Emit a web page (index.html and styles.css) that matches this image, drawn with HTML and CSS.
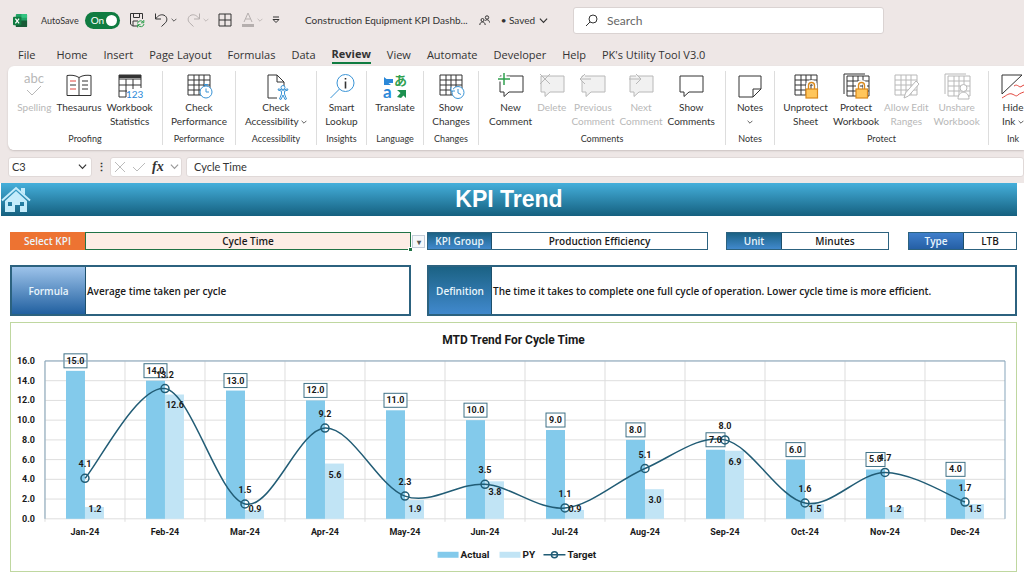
FILE: index.html
```html
<!DOCTYPE html>
<html lang="en">
<head>
  <meta charset="UTF-8" />
  <meta name="viewport" content="width=device-width, initial-scale=1" />
  <title>Construction Equipment KPI Dashboard</title>
  <link rel="stylesheet" href="styles.css">
</head>
<body>

  <!-- shared icon shapes -->
  <svg class="defs" width="0" height="0" aria-hidden="true">
    <symbol id="bubble" viewBox="0 0 26 26">
      <path d="M2 3h23v16H11l-5 4.500v-4.500H2z" />
    </symbol>
    <symbol id="grid" viewBox="0 0 26 26">
      <path d="M2 2h22v20H2zM2 7h22M2 12h22M2 17h22M8 2v20M13 2v20M18 2v20" />
    </symbol>
    <symbol id="lock" viewBox="0 0 26 26">
      <path d="M15 16v-3.500a3.500 3.500 0 0 1 7 0V16" fill="none" stroke="#fff" stroke-width="4" />
      <path d="M15.500 16v-3.500a3 3 0 0 1 6 0V16" fill="none" stroke="#d9891c" stroke-width="1.400" />
      <rect x="13" y="16" width="11.500" height="9" fill="#ffc65c" stroke="#d9891c" stroke-width="1.200" />
    </symbol>
    <symbol id="chevron" viewBox="0 0 10 10">
      <path d="M1 3l4 4 4-4" fill="none" stroke="currentColor" stroke-width="1.300" />
    </symbol>
  </svg>

  <header class="titlebar">
    <svg class="logo" viewBox="0 0 16 16" aria-hidden="true">
      <rect x="3" y="1" width="12" height="14" rx="1" fill="#21a366" />
      <path d="M9 1h5a1 1 0 0 1 1 1v3H9z" fill="#33c481" />
      <path d="M3 8h12v6a1 1 0 0 1-1 1H4a1 1 0 0 1-1-1z" fill="#185c37" />
      <rect x="0" y="4" width="9" height="9" rx="1" fill="#107c41" />
      <path d="M2.500 6l4 5M6.500 6l-4 5" stroke="#fff" stroke-width="1.300" />
    </svg>
    <label class="autosave">AutoSave
      <span class="switch"><input type="checkbox" checked /><span>On</span></span>
    </label>
    <div class="quick">
      <button aria-label="Save">
        <svg width="16" height="16" viewBox="0 0 16 16"><path d="M9 14H3.500L1.500 12V1.500h12V7M4.500 1.500v4h6v-4M4 14V9h5" /><path class="green" d="M8.500 11.500a3.200 3.200 0 0 1 6-1M14.800 8v2.800H12M15 12a3.200 3.200 0 0 1-6 1M8.700 15.500v-2.800h2.800" /></svg>
      </button>
      <button aria-label="Undo">
        <svg width="15" height="16" viewBox="0 0 15 16"><path d="M1.500 1.500v5.500h5.500M1.500 7C4 3.500 7 2 10 3.200c3.500 1.500 3.500 5.500 1.500 7.500L7.500 14.500" /></svg>
        <svg class="chev" width="6" height="6"><use href="#chevron" /></svg>
      </button>
      <button class="off" aria-label="Redo" disabled>
        <svg width="15" height="16" viewBox="0 0 15 16"><path d="M13.500 1.500v5.500H8M13.500 7C11 3.500 8 2 5 3.200c-3.500 1.500-3.500 5.500-1.500 7.500L7.500 14.500" /></svg>
        <svg class="chev" width="6" height="6"><use href="#chevron" /></svg>
      </button>
      <button aria-label="Borders">
        <svg width="14" height="14" viewBox="0 0 14 14"><path d="M1 1h12v12H1zM7 1v12M1 7h12" /></svg>
      </button>
      <button class="off" aria-label="Font color" disabled>
        <svg width="14" height="16" viewBox="0 0 14 16"><path d="M3 10L7 1l4 9M4.500 7h5" /><path d="M1 13.500h12" stroke-width="3" /></svg>
        <svg class="chev" width="6" height="6"><use href="#chevron" /></svg>
      </button>
      <button aria-label="Customize toolbar">
        <svg width="8" height="8" viewBox="0 0 8 8"><path d="M1 1h6M1 3.500h6L4 6.500z" /></svg>
      </button>
    </div>
    <div class="docname">
      <span>Construction Equipment KPI Dashb...</span>
      <svg width="11" height="11" viewBox="0 0 11 11"><circle cx="3.500" cy="5" r="1.500" /><path d="M.8 10c0-4 5.400-4 5.400 0" /><circle cx="8" cy="2.500" r="1.700" /><path d="M6 5.800c1-1.500 4.400-1.500 4.500 1.700" /></svg>
      <button>• Saved <svg width="9" height="9"><use href="#chevron" /></svg></button>
    </div>
    <label class="search">
      <svg width="13" height="13" viewBox="0 0 13 13"><circle cx="8" cy="5" r="4" /><path d="M5 8L1 12" /></svg>
      <input type="search" placeholder="Search" aria-label="Search" />
    </label>
  </header>

  <nav class="tabs">
    <button>File</button>
    <button>Home</button>
    <button>Insert</button>
    <button>Page Layout</button>
    <button>Formulas</button>
    <button>Data</button>
    <button class="active">Review</button>
    <button>View</button>
    <button>Automate</button>
    <button>Developer</button>
    <button>Help</button>
    <button>PK's Utility Tool V3.0</button>
  </nav>

  <section class="ribbon" aria-label="Review">
    <div class="group">
      <div class="tools">
        <button disabled>
          <svg viewBox="0 0 26 26"><text x="13" y="10" text-anchor="middle">abc</text><path d="M6 17l5 5 9-9" /></svg>
          Spelling
        </button>
        <button>
          <svg viewBox="0 0 26 26"><path d="M13 4.500C9 2 5 2 1 2.500v20h12 12v-20C21 2 17 2 13 4.500v18M16 8h6M16 12h6M16 16h6M4 12h6" /><path class="red" d="M4 8h6M4 16h6" /></svg>
          Thesaurus
        </button>
        <button>
          <svg viewBox="0 0 26 26"><path d="M9 24H2V2h22v13M2 6h22M2 12h22M2 18h8M9 6v18M16 6v10" /><path d="M2 3.500h22" stroke-width="3" /><path d="M10 21h17" stroke="#fff" stroke-width="10" /><text class="num" x="9" y="25">123</text></svg>
          Workbook<br>Statistics
        </button>
      </div>
      <h2>Proofing</h2>
    </div>
    <div class="group">
      <div class="tools">
        <button>
          <svg viewBox="0 0 26 26"><use href="#grid" /><g class="blue white"><circle cx="20" cy="19" r="6" /><path d="M20 15.500V19h3M18 11.500h4M20 11.500V13" /></g></svg>
          Check<br>Performance
        </button>
      </div>
      <h2>Performance</h2>
    </div>
    <div class="group">
      <div class="tools">
        <button>
          <svg viewBox="0 0 26 26"><path d="M14 25H5V2h9l7 7v4M14 2v7h7" /><g class="blue white"><circle cx="20" cy="14.500" r="2" /><path d="M15 17l3.500 1.200V21l-2 5 1.500.5 2-4.500 2 4.500 1.500-.5-2-5v-2.800L25 17l-.5-1.200-4.500 1.500-4.500-1.500z" /></g></svg>
          Check<br>Accessibility <svg class="chev" width="6" height="6"><use href="#chevron" /></svg>
        </button>
      </div>
      <h2>Accessibility</h2>
    </div>
    <div class="group">
      <div class="tools">
        <button>
          <svg viewBox="0 0 26 26"><g class="blue"><circle cx="16.500" cy="10" r="8.500" /><path d="M10.500 16L1.500 25" /></g><path d="M16.500 8.500v7M16.500 5v1.500" stroke-width="1.600" /></svg>
          Smart<br>Lookup
        </button>
      </div>
      <h2>Insights</h2>
    </div>
    <div class="group">
      <div class="tools">
        <button>
          <svg viewBox="0 0 26 26"><text class="kana" x="12" y="12">あ</text><text class="latin" x="1" y="25">a</text><path class="fillblue" d="M2 4l2.500 2H11v4H6.500l2.500 2H2z" /><path class="fillgreen" d="M24 25l-2.500-2.500L19 25l-4-1 3.500-4L15 17h9z" /></svg>
          Translate
        </button>
      </div>
      <h2>Language</h2>
    </div>
    <div class="group">
      <div class="tools">
        <button>
          <svg viewBox="0 0 26 26"><use href="#grid" /><g class="blue white"><circle cx="20" cy="19.500" r="6" /><path d="M20 16v4l3 1.500M13 14v4h4" /></g></svg>
          Show<br>Changes
        </button>
      </div>
      <h2>Changes</h2>
    </div>
    <div class="group">
      <div class="tools">
        <button>
          <svg viewBox="0 0 26 26"><use href="#bubble" /><path d="M0 6h12M6 0v12" stroke="#fff" stroke-width="5" /><path class="green" d="M0 6h12M6 0v12" stroke-width="1.500" /></svg>
          New<br>Comment
        </button>
        <button disabled>
          <svg class="filled" viewBox="0 0 26 26"><use href="#bubble" /><path d="M1 1l10 10M11 1L1 11" /></svg>
          Delete
        </button>
        <button disabled>
          <svg class="filled" viewBox="0 0 26 26"><use href="#bubble" /><path d="M11 6H0M5 1L0 6l5 5" /></svg>
          Previous<br>Comment
        </button>
        <button disabled>
          <svg class="filled" viewBox="0 0 26 26"><use href="#bubble" /><path d="M1 6h12M8 1l5 5-5 5" /></svg>
          Next<br>Comment
        </button>
        <button>
          <svg viewBox="0 0 26 26"><use href="#bubble" /></svg>
          Show<br>Comments
        </button>
      </div>
      <h2>Comments</h2>
    </div>
    <div class="group">
      <div class="tools">
        <button>
          <svg viewBox="0 0 26 26"><path d="M2 3h22v13l-8 8H2zM16 24v-8h8" /></svg>
          Notes<br><svg class="chev" width="6" height="6"><use href="#chevron" /></svg>
        </button>
      </div>
      <h2>Notes</h2>
    </div>
    <div class="group">
      <div class="tools">
        <button>
          <svg viewBox="0 0 26 26"><use href="#grid" /><use href="#lock" /></svg>
          Unprotect<br>Sheet
        </button>
        <button>
          <svg viewBox="0 0 26 26"><path d="M1 21V1h21" /><use href="#grid" x="2" y="1" /><use href="#lock" /></svg>
          Protect<br>Workbook
        </button>
        <button disabled>
          <svg viewBox="0 0 26 26"><use href="#grid" /><path class="white" d="M11 25l1.500-5L23 8l3 3-10.500 12z" /></svg>
          Allow Edit<br>Ranges
        </button>
        <button disabled>
          <svg viewBox="0 0 26 26"><path d="M1 21V1h21" /><use href="#grid" x="2" y="1" /><g class="white"><path d="M14 26c0-9 11-9 11 0z" /><circle cx="19.500" cy="15" r="3.500" /></g></svg>
          Unshare<br>Workbook
        </button>
      </div>
      <h2>Protect</h2>
    </div>
    <div class="group ink">
      <div class="tools">
        <button>
          <svg viewBox="0 0 26 26"><path d="M2 2h20L2 21z" /><path class="red" d="M2 25c5-3 7-5 10-4s4 3 6 1 4-2 8-4M14 13c4-3 5 3 8 0l4-2" /></svg>
          Hide<br>Ink <svg class="chev" width="6" height="6"><use href="#chevron" /></svg>
        </button>
      </div>
      <h2>Ink</h2>
    </div>
  </section>

  <div class="formulabar">
    <div class="namebox">
      <input type="text" value="C3" aria-label="Name box" />
      <svg width="9" height="9"><use href="#chevron" /></svg>
    </div>
    <span class="dots">⋮</span>
    <div class="fx">
      <button aria-label="Cancel" disabled><svg width="12" height="12" viewBox="0 0 12 12"><path d="M1 1l10 10M11 1L1 11" /></svg></button>
      <button aria-label="Enter" disabled><svg width="14" height="12" viewBox="0 0 14 12"><path d="M1 6l4 4 8-8" /></svg></button>
      <button class="fn" aria-label="Insert function">fx</button>
      <svg width="9" height="9"><use href="#chevron" /></svg>
    </div>
    <input class="formula" type="text" value="Cycle Time" aria-label="Formula" />
  </div>

  <main class="sheet">
    <div class="banner">
      <a href="#" aria-label="Home">
        <svg width="30" height="28" viewBox="0 0 30 28">
          <path d="M1 14.500L15 2l14 12.500" />
          <path class="solid" d="M20 2h4v7l-4-3.500zM4 15L15 5l11 10v11h-7v-7h-5v7H4zM7 16v4h4v-4zM19 16v4h4v-4z" />
        </svg>
      </a>
      <h1>KPI Trend</h1>
    </div>

    <div class="row top">
      <div class="picker">
        <label for="kpi">Select KPI</label>
        <div class="cell">
          <select id="kpi"><option>Cycle Time</option></select>
          <span class="handle"></span>
        </div>
        <button aria-label="Open list">▾</button>
      </div>
      <div class="field"><span class="name">KPI Group</span><span class="value">Production Efficiency</span></div>
      <div class="field unit"><span class="name">Unit</span><span class="value">Minutes</span></div>
      <div class="field type"><span class="name">Type</span><span class="value">LTB</span></div>
    </div>

    <div class="row info">
      <div class="field formula-field"><span class="name">Formula</span><span class="value">Average time taken per cycle</span></div>
      <div class="field"><span class="name">Definition</span><span class="value">The time it takes to complete one full cycle of operation. Lower cycle time is more efficient.</span></div>
    </div>

    <section class="chart">
      <svg id="chart" viewBox="0 0 1006 248" role="img" aria-label="MTD Trend For Cycle Time"></svg>
    </section>
  </main>

  <script src="chart.js"></script>
</body>
</html>
```
FILE: styles.css
```css
* { margin: 0; padding: 0; box-sizing: border-box; }
body {
  font-family: Lato, 'Segoe UI', sans-serif;
  font-size: 10px;
  color: #333;
  background: #eee7e6;
  overflow: hidden;
}
button, input, select { font: inherit; color: inherit; border: none; background: none; outline: none; }
svg { fill: none; stroke: currentColor; flex: none; }
svg text { stroke: none; }
.defs { position: absolute; }
.green { stroke: #2fa04e; }
.blue { stroke: #3a94d6; }
.red { stroke: #e2453c; }
.white { fill: #fff; }
.filled { fill: #f1f1f1; }

/* title bar */
.titlebar {
  display: flex;
  align-items: center;
  height: 40px;
  padding-left: 13px;
}
.logo { width: 15px; height: 15px; stroke: none; margin-right: 13px; }
.autosave { display: flex; align-items: center; gap: 6px; font-size: 9px; width: 79px; }
.switch {
  position: relative;
  width: 37px;
  height: 17px;
  border-radius: 9px;
  background: #107c41;
  color: #fff;
  font-size: 10px;
  line-height: 17px;
  padding-left: 6px;
}
.switch input {
  position: absolute;
  right: 3px;
  top: 3px;
  width: 11px;
  height: 11px;
  appearance: none;
  border-radius: 50%;
  background: #fff;
}
.quick { display: flex; align-items: center; gap: 9px; width: 176px; margin-left: 9px; }
.quick button { display: flex; align-items: center; gap: 2px; }
.off { color: #b5afae; }
.docname { display: flex; align-items: center; gap: 11px; width: 257px; margin-right: 11px; white-space: nowrap; }
.docname button { display: flex; align-items: center; gap: 4px; }
.search {
  display: flex;
  align-items: center;
  gap: 9px;
  width: 311px;
  height: 27px;
  padding-left: 11px;
  background: #fff;
  border: 1px solid #dad3d2;
  border-radius: 3px;
}
.search input { flex: 1; min-width: 0; font-size: 12px; }
.search input::placeholder { color: #666; }

/* tabs */
.tabs { display: flex; gap: 16px; height: 26px; padding-left: 18px; font: 11px 'Open Sans', sans-serif; }
.tabs button { height: 24px; padding-top: 4px; white-space: nowrap; }
.tabs button:first-child { margin-right: 5px; }
.tabs .active { font-weight: bold; border-bottom: 2px solid #107c41; }

/* ribbon */
.ribbon {
  display: grid;
  grid-template-columns: 155fr 73fr 81fr 50fr 57fr 55fr 247fr 49fr 214fr minmax(0, 35fr);
  height: 84px;
  margin-left: 8px;
  padding: 5px 0;
  background: #fff;
  border-radius: 6px 0 0 6px;
  box-shadow: 0 1px 2px #c9c1c0;
  overflow: hidden;
}
.group {
  display: flex;
  flex-direction: column;
  align-items: center;
  justify-content: space-between;
  min-width: 0;
  border-right: 1px solid #ddd;
}
.group h2 { font-size: 9px; font-weight: normal; line-height: 12px; }
.ink { width: 48px; border: none; }
.tools { display: flex; justify-content: center; gap: 5px; }
.tools button { display: block; line-height: 14px; white-space: nowrap; align-self: flex-start; }
.tools button > svg:first-child { display: block; width: 26px; height: 26px; margin: 2px auto 1px; overflow: visible; }
.tools button:disabled { color: #b8b8b8; }
.tools text { font-size: 13px; fill: currentColor; }
.tools .num { font-size: 10px; fill: #2b88d8; }
.tools .kana { font: bold 13px 'Noto Sans CJK JP', sans-serif; fill: #2fa04e; }
.tools .latin { font-size: 17px; font-weight: bold; fill: #2b88d8; }
.fillblue { fill: #2b88d8; stroke: none; }
.fillgreen { fill: #1e9150; stroke: none; }

/* formula bar */
.formulabar { display: flex; align-items: center; height: 33px; padding-left: 8px; font-size: 11px; }
.namebox, .fx, .formula { height: 20px; background: #fff; border: 1px solid #e0d9d8; border-radius: 3px; }
.namebox { display: flex; align-items: center; width: 84px; padding: 0 4px 0 3px; }
.namebox input { flex: 1; min-width: 0; }
.dots { width: 18px; text-align: center; font-weight: bold; }
.fx { display: flex; align-items: center; gap: 6px; width: 72px; padding: 0 3px; margin-right: 4px; color: #999; }
.fx button { display: flex; }
.fx button:disabled { color: #bbb; }
.fx .fn { font: italic bold 14px 'Liberation Serif', serif; color: #333; }
.formula { flex: 1; padding-left: 7px; }

/* sheet */
.sheet { background: #fff; padding: 0 7px 2px 1px; font-family: 'Open Sans', sans-serif; font-weight: 600; color: #1a1a1a; }
.banner {
  display: flex;
  align-items: center;
  height: 33px;
  background: linear-gradient(#45afdb, #15607f);
}
.banner a { display: flex; width: 30px; color: #c5ecfb; }
.banner svg { stroke-width: 2; }
.solid { fill: currentColor; fill-rule: evenodd; stroke: none; }
.banner h1 { flex: 1; padding-right: 30px; text-align: center; color: #fff; font: bold 23px 'Liberation Sans', sans-serif; }
.row { display: grid; padding-left: 9px; }
.top { grid-template-columns: 417fr 281fr 18fr 163fr 19fr 109fr; margin-top: 16px; height: 18px; }
.top .unit { grid-column: 4; }
.top .type { grid-column: 6; }
.info { grid-template-columns: 401fr 590fr; gap: 16px; height: 51px; margin-top: 15px; }
.picker { display: flex; }
.picker label, .name {
  display: flex;
  align-items: center;
  justify-content: center;
  color: #e9f5fc;
}
.picker label { width: 75px; background: #ed7332; }
.cell { position: relative; display: flex; flex: 1; }
.cell select {
  flex: 1;
  appearance: none;
  text-align: center;
  text-align-last: center;
  background: #fdede5;
  border: 1px solid #217346;
}
.handle {
  position: absolute;
  right: -1px;
  bottom: -1px;
  width: 4px;
  height: 4px;
  background: #217346;
  border: solid #fff;
  border-width: 1px 0 0 1px;
}
.picker button { width: 13px; height: 13px; margin: 3px 2px 0 1px; border: 1px solid #c3ccd8; background: #f6f8fb; font-size: 8px; line-height: 8px; color: #555; }
.field { display: flex; border: 1px solid #2c627f; }
.name { width: 64px; background: linear-gradient(#1b6284, #4189cd); border-right: 1px solid #1d4f6b; }
.info .field { border-width: 2px; }
.info .name { width: 63px; }
.unit .name, .type .name { width: 55px; }
.type .name { background: linear-gradient(#3f7fcb, #255fa5); }
.info .formula-field .name { width: 74px; background: linear-gradient(#9dc3ea, #2160a0); }
.value { flex: 1; display: flex; align-items: center; justify-content: center; white-space: nowrap; }
.info .value { justify-content: flex-start; padding-left: 1px; }

/* chart */
.chart { margin: 6px 0 0 9px; border: 1px solid #bfd7a0; }
#chart { display: block; width: 100%; stroke: none; }
#chart text { font-family: Roboto, sans-serif; font-weight: bold; font-size: 9px; fill: #1a1a1a; text-anchor: middle; }
#chart .title { font-size: 12px; }
#chart .axis { text-anchor: end; }
#chart .legend { font-size: 10px; text-anchor: start; }
#chart .gridline { stroke: #dedede; }
#chart .frame { stroke: #86a5bb; fill: none; }
#chart .actual { fill: #83caeb; }
#chart .py { fill: #c1e4f5; }
#chart .tag { fill: #fff; stroke: #3f7186; }
#chart .target { fill: none; stroke: #215c75; stroke-width: 1.500; }
```
FILE: chart.js
```js
const months = ['Jan', 'Feb', 'Mar', 'Apr', 'May', 'Jun', 'Jul', 'Aug', 'Sep', 'Oct', 'Nov', 'Dec'];
const actual = [15, 14, 13, 12, 11, 10, 9, 8, 7, 6, 5, 4];
const py = [1.2, 12.6, 0.9, 5.6, 1.9, 3.8, 0.9, 3.0, 6.9, 1.5, 1.2, 1.5];
const target = [4.1, 13.2, 1.5, 9.2, 2.3, 3.5, 1.1, 5.1, 8.0, 1.6, 4.7, 1.7];

const left = 34, right = 995, top_ = 38, bottom = 196;
const step = (right - left) / 12;
const bar = 19;
const y = v => bottom - v * (bottom - top_) / 16;
const mid = i => left + step * (i + 0.5);

const text = (x, ty, s, cls = '') => `<text class="${cls}" x="${x}" y="${ty}">${s}</text>`;
const rect = (x, ry, w, h, cls) => `<rect class="${cls}" x="${x}" y="${ry}" width="${w}" height="${h}" />`;

let grid = '', bars = '', tags = '', labels = '', dots = '';

for (let v = 0; v <= 16; v += 2) {
  grid += `<path class="gridline" d="M${left} ${y(v)}H${right}" />`;
  labels += text(left - 10, y(v) + 3, v.toFixed(1), 'axis');
}

months.forEach((m, i) => {
  const x = mid(i);
  grid += `<path class="gridline" d="M${left + step * i} ${top_}V${bottom + 3}" />`;
  bars += rect(x - bar, y(actual[i]), bar, bottom - y(actual[i]), 'actual');
  bars += rect(x, y(py[i]), bar, bottom - y(py[i]), 'py');

  const w = actual[i] >= 10 ? 23 : 19;
  tags += rect(x - bar / 2 - w / 2, y(actual[i]) - 17, w, 14, 'tag');
  labels += text(x - bar / 2, y(actual[i]) - 7, actual[i].toFixed(1));
  labels += text(x + 10, Math.min(y(py[i]) + 14, bottom - 7), py[i].toFixed(1));
  labels += text(x, y(target[i]) - 11, target[i].toFixed(1));
  labels += text(x, bottom + 16, m + '-24');
  dots += `<circle class="target" cx="${x}" cy="${y(target[i])}" r="4" />`;
});

// smoothed line through the target points
const pt = i => {
  const k = Math.max(0, Math.min(11, i));
  return [mid(k), y(target[k])];
};
let d = `M${pt(0)}`;
for (let i = 0; i < 11; i++) {
  const [a, b, c, e] = [pt(i - 1), pt(i), pt(i + 1), pt(i + 2)];
  d += `C${b[0] + (c[0] - a[0]) / 6} ${b[1] + (c[1] - a[1]) / 6} ${c[0] - (e[0] - b[0]) / 6} ${c[1] - (e[1] - b[1]) / 6} ${c[0]} ${c[1]}`;
}

const legend =
  rect(427, 229, 21, 6, 'actual') + text(450, 235, 'Actual', 'legend') +
  rect(489, 229, 21, 6, 'py') + text(512, 235, 'PY', 'legend') +
  '<path class="target" d="M533 232h22" /><circle class="target" cx="544" cy="232" r="3" />' +
  text(557, 235, 'Target', 'legend');

document.getElementById('chart').innerHTML =
  text(503, 21, 'MTD Trend For Cycle Time', 'title') +
  grid + bars + tags +
  `<path class="frame" d="M${left} ${bottom}V${top_}H${right}V${bottom}" />` +
  `<path class="target" d="${d}" />` + dots + labels + legend;
```
